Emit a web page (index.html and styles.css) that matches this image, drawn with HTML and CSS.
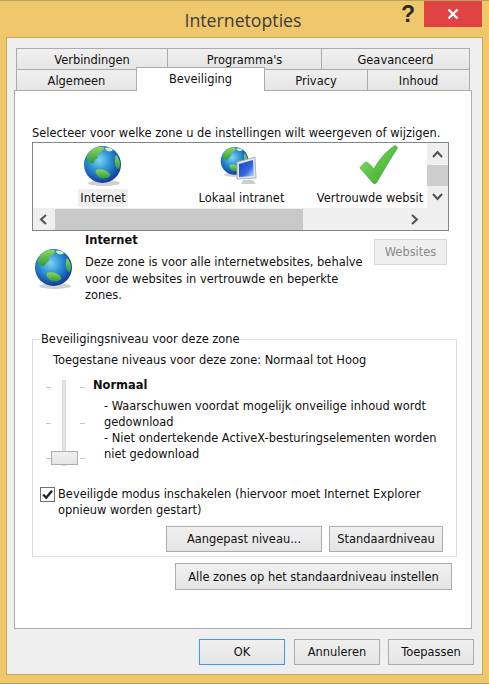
FILE: index.html
```html
<!DOCTYPE html>
<html lang="nl">
<head>
<meta charset="utf-8">
<title>Internetopties</title>
<link rel="stylesheet" href="styles.css">
</head>
<body>
<svg class="defs" width="0" height="0" aria-hidden="true">
  <defs>
    <radialGradient id="sea" cx="42%" cy="38%" r="62%">
      <stop offset="0" stop-color="#7fd4f0"/>
      <stop offset="0.5" stop-color="#2a8fd0"/>
      <stop offset="1" stop-color="#123c9c"/>
    </radialGradient>
    <linearGradient id="land" x1="0" y1="0" x2="0" y2="1">
      <stop offset="0" stop-color="#8fd85c"/>
      <stop offset="1" stop-color="#2f9a3a"/>
    </linearGradient>
    <linearGradient id="tick" x1="0" y1="0" x2="1" y2="1">
      <stop offset="0" stop-color="#8fe060"/>
      <stop offset="1" stop-color="#2fa52c"/>
    </linearGradient>
    <linearGradient id="screen" x1="0" y1="0" x2="1" y2="1">
      <stop offset="0" stop-color="#1c3fc0"/>
      <stop offset="0.6" stop-color="#2f6ae0"/>
      <stop offset="1" stop-color="#cfe0fa"/>
    </linearGradient>
    <symbol id="globe" viewBox="0 0 40 42">
      <ellipse cx="21" cy="38" rx="16" ry="3" fill="#9a9a9a" opacity=".45"/>
      <circle cx="19.500" cy="19.500" r="18.500" fill="url(#sea)"/>
      <path d="M5 9C9 3 15 1 20 2c2 1 1 3-1 4-2 2-4 2-4 5 0 3-3 3-4 6-1 2-3 1-5 0-2-2-3-5-1-8z" fill="url(#land)"/>
      <path d="M13 25c4-2 10 0 13 3 2 2 1 4-2 5-4 1-8 0-10-3-1-2-2-3-1-5z" fill="url(#land)"/>
      <path d="M33 10c2 2 4 6 4 9s-1 5-2 5c-2-1-3-4-3-7 0-3 0-6 1-7z" fill="url(#land)"/>
      <path d="M22 3c3-1 6 0 8 2-1 1-3 2-5 1-1 0-3-1-3-3z" fill="#d7f0c8"/>
    </symbol>
  </defs>
</svg>

<div class="titlebar">
  <span class="title">Internetopties</span>
  <span class="help">?</span>
  <span class="close">
    <svg width="12" height="12" viewBox="0 0 12 12"><path d="M1.500 1.500l9 9M10.500 1.500l-9 9" stroke="#fff" stroke-width="2.400" fill="none"/></svg>
  </span>
</div>

<div class="client">
  <div class="tabs">
    <div class="tabrow top">
      <div class="tab w152">Verbindingen</div>
      <div class="tab w155">Programma's</div>
      <div class="tab w149">Geavanceerd</div>
    </div>
    <div class="tabrow">
      <div class="tab w121">Algemeen</div>
      <div class="tab active">Beveiliging</div>
      <div class="tab w104">Privacy</div>
      <div class="tab w103">Inhoud</div>
    </div>
  </div>

  <div class="panel">
    <p class="intro">Selecteer voor welke zone u de instellingen wilt weergeven of wijzigen.</p>

    <div class="zonebox">
      <div class="zonetop">
        <div class="zones">
          <div class="zone z1">
            <svg class="zicon" width="40" height="42"><use href="#globe"/></svg>
            <span class="zlabel selected">Internet</span>
          </div>
          <div class="zone z2">
            <svg class="zicon" width="44" height="42" viewBox="0 0 44 42">
              <use href="#globe" width="30" height="32" x="0" y="1"/>
              <path d="M17 17l18-5 1 21-19 1z" fill="#dfe4ea" stroke="#9aa4b0" stroke-width=".8"/>
              <path d="M19 19l14-4 1 16-15 1z" fill="url(#screen)"/>
              <path d="M23 35h10l3 4H21z" fill="#c9ced4"/>
            </svg>
            <span class="zlabel">Lokaal intranet</span>
          </div>
          <div class="zone z3">
            <svg class="zicon ztick" width="40" height="42" viewBox="0 0 40 42">
              <path d="M1 23c0-1 5-6 6-6 1 0 5 3 8 7C20 14 28 6 35 1c2-1 4 1 3 3C31 14 24 27 18 37c-1 2-3 2-4 1z" fill="url(#tick)" stroke="#3c9a34" stroke-width=".6"/>
            </svg>
            <span class="zlabel clip">Vertrouwde websit</span>
          </div>
        </div>
        <div class="vscroll">
          <svg class="arrow" width="21" height="22" viewBox="0 0 21 22"><path d="M6 14l4.500-5 4.500 5" stroke="#505050" stroke-width="2" fill="none"/></svg>
          <div class="vthumb"></div>
          <svg class="arrow" width="21" height="22" viewBox="0 0 21 22"><path d="M6 8l4.500 5 4.500-5" stroke="#505050" stroke-width="2" fill="none"/></svg>
        </div>
      </div>
      <div class="hscroll">
        <svg class="arrow" width="22" height="21" viewBox="0 0 22 21"><path d="M13 6l-5 4.500 5 4.500" stroke="#505050" stroke-width="2" fill="none"/></svg>
        <div class="hthumb"></div>
        <div class="hspace"></div>
        <svg class="arrow" width="22" height="21" viewBox="0 0 22 21"><path d="M8 6l5 4.500-5 4.500" stroke="#505050" stroke-width="2" fill="none"/></svg>
      </div>
    </div>

    <div class="info">
      <svg class="infoicon" width="40" height="42"><use href="#globe"/></svg>
      <div class="infotext">
        <div class="bold">Internet</div>
        <p class="desc">Deze zone is voor alle internetwebsites, behalve<br>voor de websites in vertrouwde en beperkte<br>zones.</p>
      </div>
      <button class="btn disabled websites" type="button">Websites</button>
    </div>

    <fieldset class="group">
      <legend class="legend">Beveiligingsniveau voor deze zone</legend>
      <div class="allowed">Toegestane niveaus voor deze zone: Normaal tot Hoog</div>
      <div class="level">
        <div class="slider">
          <div class="ticks"><i></i><i></i><i></i></div>
          <div class="track"></div>
          <div class="ticks"><i></i><i></i><i></i></div>
          <div class="thumb"></div>
        </div>
        <div class="leveltext">
          <div class="bold">Normaal</div>
          <div class="bullets">
            <div><span class="indent">- Waarschuwen voordat mogelijk onveilige inhoud wordt</span><br>gedownload</div>
            <div><span class="indent">- Niet ondertekende ActiveX-besturingselementen worden</span><br>niet gedownload</div>
          </div>
        </div>
      </div>
      <div class="check">
        <span class="box"><svg width="13" height="13" viewBox="0 0 13 13"><path d="M2.200 6.500l3 3.200 5.800-7" stroke="#202020" stroke-width="2.400" fill="none"/></svg></span>
        <span class="checklabel">Beveiligde modus inschakelen (hiervoor moet Internet Explorer<br>opnieuw worden gestart)</span>
      </div>
      <div class="groupbtns">
        <button class="btn custom" type="button">Aangepast niveau...</button>
        <button class="btn standard" type="button">Standaardniveau</button>
      </div>
    </fieldset>

    <div class="allrow">
      <button class="btn allzones" type="button">Alle zones op het standaardniveau instellen</button>
    </div>
  </div>

  <div class="footer">
    <button class="btn foot default" type="button">OK</button>
    <button class="btn foot" type="button">Annuleren</button>
    <button class="btn foot" type="button">Toepassen</button>
  </div>
</div>
</body>
</html>
```
FILE: styles.css
```css
* { box-sizing: border-box; }
html, body { margin: 0; padding: 0; }
body {
  width: 489px;
  height: 684px;
  overflow: hidden;
  background: #f0c86c;
  border-top: 1px solid #b9a05c;
  border-bottom: 1px solid #b9a05c;
  font-family: "DejaVu Sans", Verdana, sans-serif;
  font-size: 11.450px;
  line-height: 16px;
  color: #101010;
}
.defs { position: absolute; }
.titlebar {
  height: 36px;
  position: relative;
  text-align: center;
  padding-top: 8px;
}
.title {
  font-family: "Open Sans", sans-serif;
  font-size: 17.700px;
  line-height: 22px;
  color: #3c3c3c;
  margin-right: 3px;
}
.help {
  position: absolute;
  left: 401px;
  top: 1px;
  font-family: "Liberation Sans", sans-serif;
  font-weight: 700;
  font-size: 23px;
  line-height: 25px;
  color: #2a2a2a;
}
.close {
  position: absolute;
  left: 424px;
  top: 0;
  width: 58px;
  height: 26px;
  background: #e04343;
  display: flex;
  align-items: center;
  justify-content: center;
}
.client {
  margin: 0 6px 0 6px;
  width: 477px;
  height: 638px;
  background: #efefef;
  border: 1px solid #c9a95c;
  padding: 10px 8px 0 7px;
}
.tabs { display: flex; flex-direction: column; padding: 0 2px; position: relative; }
.tabrow { display: flex; height: 21px; }
.tab {
  height: 21px;
  border: 1px solid #acacac;
  border-bottom: 0;
  background: linear-gradient(#f0f0f0, #e5e5e5);
  text-align: center;
  line-height: 22px;
  margin-right: -1px;
}
.tabrow.top .tab { height: 22px; }
.w152 { width: 152px; }
.w155 { width: 155px; }
.w149 { width: 149px; }
.w121 { width: 121px; }
.w104 { width: 104px; }
.w103 { width: 103px; }
.tab.active {
  width: 129px;
  height: 24px;
  margin-top: -2px;
  background: #fff;
  line-height: 22px;
  position: relative;
  z-index: 2;
}
.panel {
  width: 458px;
  height: 539px;
  background: #fff;
  border: 1px solid #acacac;
  padding: 34px 0 0 17px;
}
.intro { margin: 0; height: 17px; white-space: nowrap; }
.zonebox {
  width: 417px;
  height: 89px;
  border: 1px solid #80868c;
  background: #efefef;
  margin-bottom: 8px;
}
.zonetop { display: flex; height: 65px; }
.zones { width: 394px; background: #fff; display: flex; }
.zone { display: flex; flex-direction: column; align-items: center; }
.zicon { display: block; margin-top: 2px; }
.ztick { margin-left: 17px; }
.z1 { width: 140px; }
.z2 { width: 137px; }
.z3 { width: 117px; overflow: hidden; padding-left: 3px; }
.zlabel {
  display: block;
  height: 18px;
  line-height: 18px;
  padding: 0 2px;
  white-space: nowrap;
  margin-top: 2px;
}
.zlabel.selected { background: #efefef; }
.vscroll { width: 21px; background: #efefef; display: flex; flex-direction: column; }
.arrow { display: block; flex: none; }
.vthumb { height: 21px; background: #cdcdcd; }
.hscroll { display: flex; height: 21px; width: 393px; margin-top: 1px; }
.hthumb { width: 248px; background: #c8c8c8; }
.hspace { flex: 1; }
.info { display: flex; width: 415px; height: 92px; }
.infoicon { flex: none; margin: 9px 11px 0 2px; }
.infotext { width: 278px; flex: none; white-space: nowrap; margin-top: -7px; }
.bold { font-weight: 700; }
.desc { margin: 6px 0 0; line-height: 16.500px; }
.btn {
  font-family: inherit;
  font-size: inherit;
  line-height: 16px;
  color: #101010;
  height: 26px;
  padding: 0;
  border: 1px solid #acacac;
  background: linear-gradient(#f0f0f0, #e5e5e5);
  white-space: nowrap;
}
.websites { width: 73px; margin-left: 11px; flex: none; }
.btn.disabled { background: #efefef; border-color: #d9d9d9; color: #8a8a8a; }
.group {
  margin: 0;
  padding: 5px 0 0 7px;
  width: 425px;
  height: 226px;
  border: 1px solid #dcdcdc;
  min-width: 0;
}
.legend { padding: 0 1px; }
.allowed { padding-left: 13px; height: 25px; }
.level { display: flex; height: 109px; }
.slider {
  width: 47px;
  height: 86px;
  margin: 3px 0 0 6px;
  position: relative;
  display: flex;
  flex: none;
}
.track { width: 4px; height: 86px; margin: 0 14px 0 11px; background: #e6e6e6; border: 1px solid #d8d8d8; }
.ticks { width: 5px; height: 72px; margin-top: 7px; display: flex; flex-direction: column; justify-content: space-between; }
.ticks i { display: block; height: 1px; background: #c8c8c8; }
.thumb {
  position: absolute;
  left: 5px;
  top: 71px;
  width: 27px;
  height: 14px;
  border: 1px solid #acacac;
  background: linear-gradient(#f0f0f0, #e5e5e5);
}
.bullets { margin-top: 5px; margin-left: 11px; }
.indent { white-space: nowrap; }
.check { display: flex; gap: 3px; height: 37px; }
.box {
  width: 15px;
  height: 15px;
  border: 1px solid #707070;
  background: #fff;
  flex: none;
  margin-top: 1px;
  display: flex;
  align-items: center;
  justify-content: center;
}
.checklabel { white-space: nowrap; }
.groupbtns { display: flex; justify-content: flex-end; gap: 7px; padding-right: 13px; margin-top: 3px; }
.custom { width: 156px; }
.standard { width: 114px; }
.allrow { display: flex; justify-content: flex-end; width: 420px; margin-top: 6px; }
.allzones { width: 277px; height: 27px; }
.footer { display: flex; justify-content: flex-end; gap: 8px; margin-top: 10px; }
.foot { width: 86px; }
.default { border-color: #3c9ae8; margin-right: 1px; }
```
